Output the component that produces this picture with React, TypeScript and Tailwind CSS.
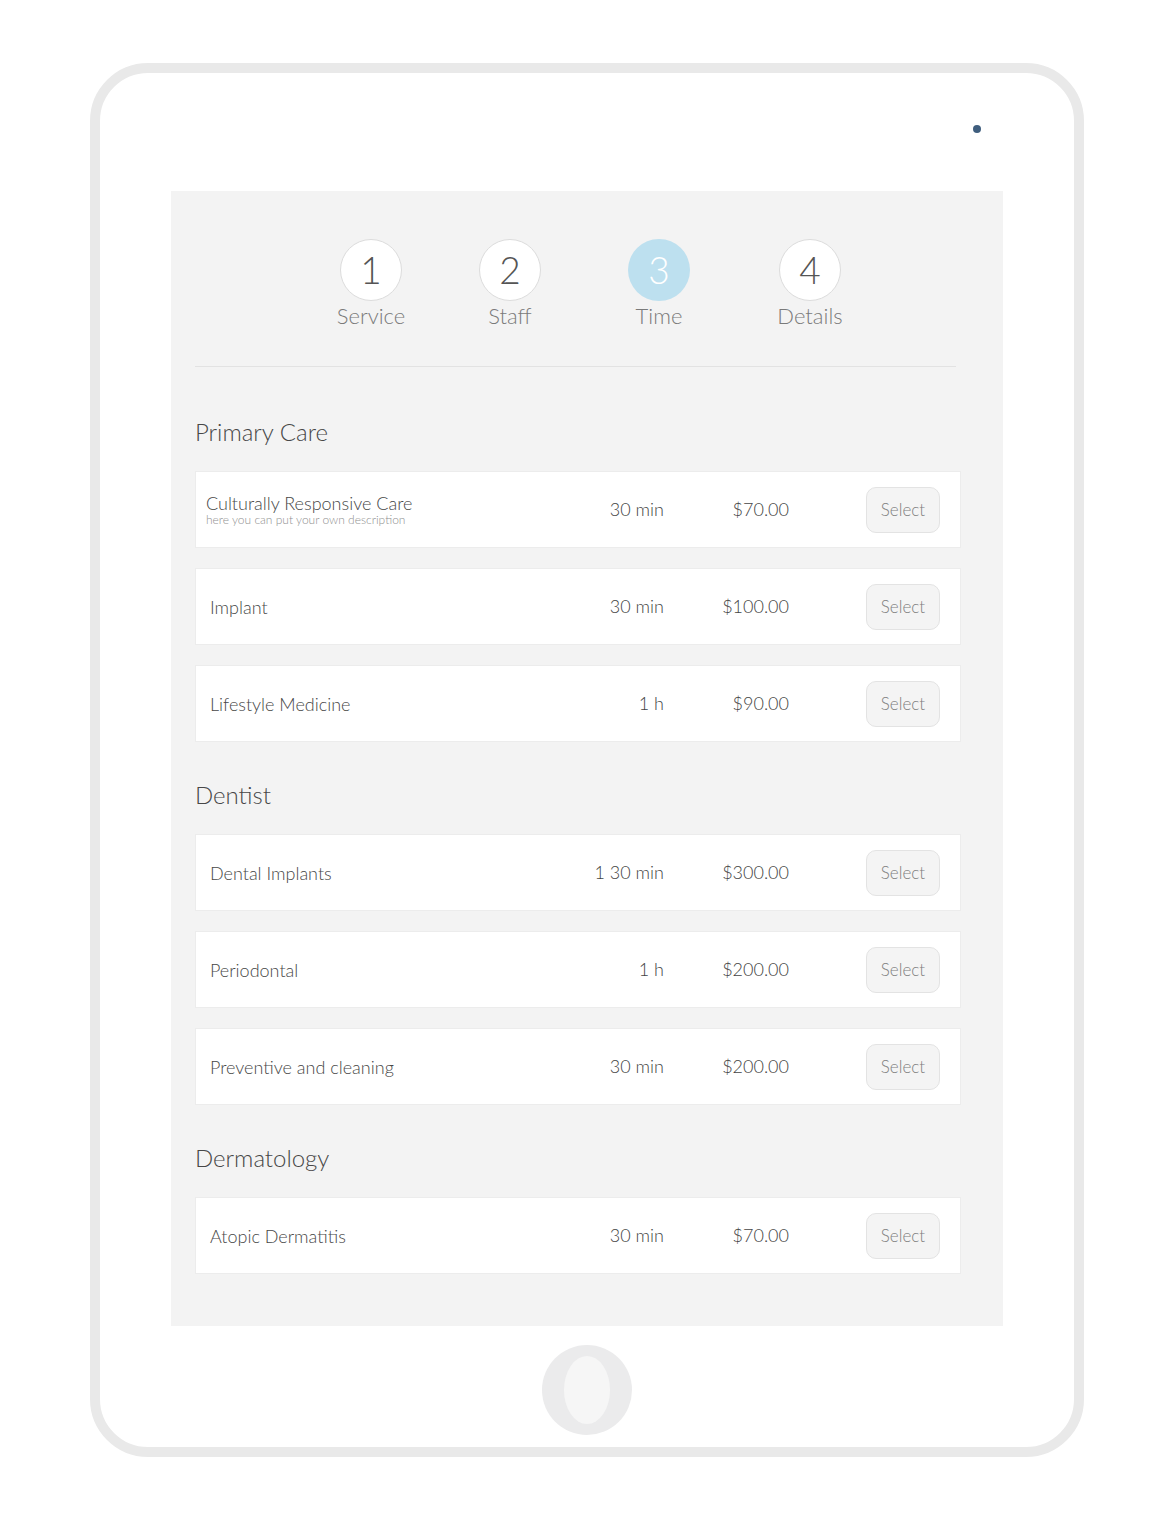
import React from "react";

type Item = { name: string; desc?: string; dur: string; price: string };
type Section = { title: string; items: Item[] };

const sections: Section[] = [
  {
    title: "Primary Care",
    items: [
      { name: "Culturally Responsive Care", desc: "here you can put your own description", dur: "30 min", price: "$70.00" },
      { name: "Implant", dur: "30 min", price: "$100.00" },
      { name: "Lifestyle Medicine", dur: "1 h", price: "$90.00" },
    ],
  },
  {
    title: "Dentist",
    items: [
      { name: "Dental Implants", dur: "1 30 min", price: "$300.00" },
      { name: "Periodontal", dur: "1 h", price: "$200.00" },
      { name: "Preventive and cleaning", dur: "30 min", price: "$200.00" },
    ],
  },
  {
    title: "Dermatology",
    items: [{ name: "Atopic Dermatitis", dur: "30 min", price: "$70.00" }],
  },
];

const steps = [
  { n: "1", label: "Service", ml: "ml-0", active: false },
  { n: "2", label: "Staff", ml: "ml-[39px]", active: false },
  { n: "3", label: "Time", ml: "ml-[49px]", active: true },
  { n: "4", label: "Details", ml: "ml-[51px]", active: false },
];

function Row({ item }: { item: Item }) {
  return (
    <div className="flex h-[77px] w-[766px] items-center border border-[#ececec] bg-white">
      <div className={item.desc ? "flex-1 pl-[10px]" : "flex-1 pl-[14px]"}>
        <div className="text-[18px] leading-[20px] text-[#474747]">{item.name}</div>
        {item.desc && (
          <div className="text-[12px] leading-[14px] text-[#8f8f8f]">{item.desc}</div>
        )}
      </div>
      <div className="w-[120px] text-right text-[18px] text-[#444]">{item.dur}</div>
      <div className="w-[125px] text-right text-[18px] text-[#444]">{item.price}</div>
      <button className="ml-[77px] mr-[20px] flex h-[46px] w-[74px] items-center justify-center rounded-[10px] border border-[#e3e3e3] bg-[#f4f4f4] text-[17px] text-[#7e7e7e]">
        Select
      </button>
    </div>
  );
}

export default function App() {
  return (
    <div
      className="h-[1536px] w-[1175px] bg-white pl-[90px] pt-[63px] font-light"
      style={{ fontFamily: "Lato, 'Open Sans', sans-serif" }}
    >
      <div className="flex h-[1394px] w-[994px] flex-col rounded-[58px] border-[10px] border-[#e9e9e9] bg-white">
        <div className="flex h-[118px] justify-end">
          <div className="mr-[93px] mt-[52px] h-[8px] w-[8px] rounded-full bg-[#3f5e7e]" />
        </div>
        <div className="mx-[71px] flex h-[1135px] flex-col bg-[#f3f3f3] pt-[48px]">
          <div className="flex pl-[150px]">
            {steps.map((s) => (
              <div key={s.n} className={`flex w-[100px] flex-col items-center ${s.ml}`}>
                <div
                  className={
                    s.active
                      ? "flex h-[62px] w-[62px] items-center justify-center rounded-full bg-[#bde0ef] text-[37px] font-light text-white"
                      : "flex h-[62px] w-[62px] items-center justify-center rounded-full border border-[#dcdcdc] bg-white text-[37px] font-light text-[#555]"
                  }
                >
                  {s.n}
                </div>
                <div className="mt-[3px] text-[22px] leading-[24px] text-[#7a7a7a]">{s.label}</div>
              </div>
            ))}
          </div>
          <div className="ml-[24px] mt-[38px] h-px w-[761px] bg-[#e2e2e2]" />
          <div className="ml-[24px] flex flex-col">
            {sections.map((sec, i) => (
              <div key={sec.title} className={i === 0 ? "mt-[51px]" : "mt-[39px]"}>
                <div className="text-[24px] leading-[28px] text-[#474747]">{sec.title}</div>
                <div className="mt-[25px] flex flex-col gap-[20px]">
                  {sec.items.map((it) => (
                    <Row key={it.name} item={it} />
                  ))}
                </div>
              </div>
            ))}
          </div>
        </div>
        <div className="mt-[19px] flex justify-center">
          <div className="flex h-[90px] w-[90px] items-center justify-center rounded-full bg-[#ebebec]">
            <div className="h-[68px] w-[46px] rounded-[50%] bg-[#f6f6f6]" />
          </div>
        </div>
      </div>
    </div>
  );
}
